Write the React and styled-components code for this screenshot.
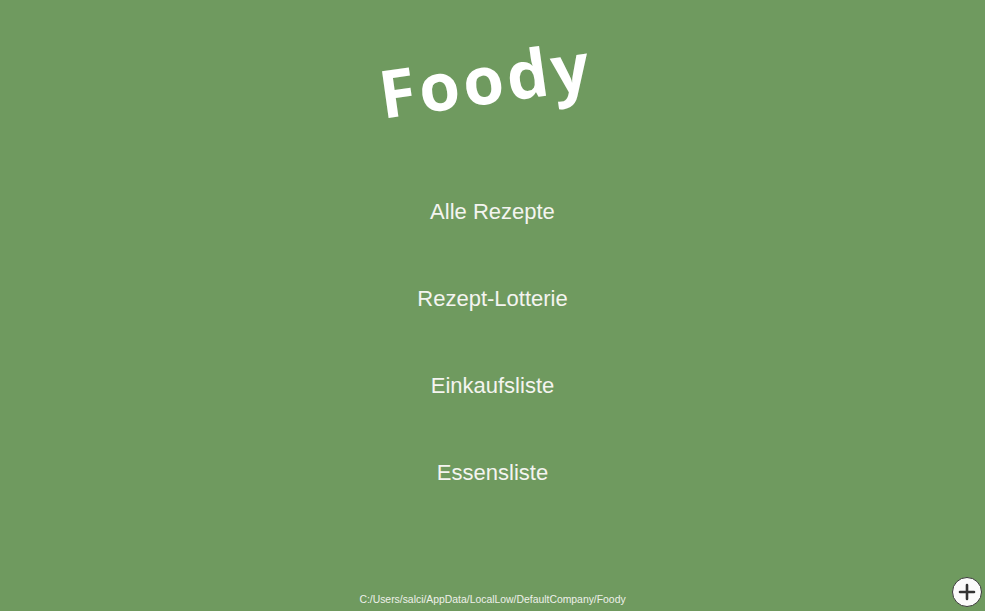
import React from 'react';
import styled, { createGlobalStyle } from 'styled-components';

const GlobalStyle = createGlobalStyle`
    html, body {
        margin: 0;
        padding: 0;
        background: #6f9a5f;
    }
    body {
        font-family: "Liberation Sans", Arial, sans-serif;
        overflow: hidden;
    }
`;

const Screen = styled.div`
    width: 985px;
    height: 611px;
    background: #6f9a5f;
    display: flex;
    flex-direction: column;
    align-items: center;
    position: relative;
`;

const Title = styled.h1`
    margin: 40px 0 0 -14px;
    font-family: "Open Sans", "DejaVu Sans", sans-serif;
    font-weight: 700;
    font-size: 66px;
    letter-spacing: 3.5px;
    color: #ffffff;
    line-height: 76px;
    transform: rotate(-8deg);
`;

const Menu = styled.nav`
    margin-top: 83px;
    display: flex;
    flex-direction: column;
    align-items: center;
    gap: 61px;
`;

const MenuItem = styled.div`
    font-size: 22px;
    line-height: 26px;
    color: #f4f4f0;
    cursor: pointer;
`;

const PathText = styled.div`
    margin-top: auto;
    margin-bottom: 6px;
    font-size: 10.4px;
    color: #eef0ea;
`;

const AddButton = styled.button`
    position: absolute;
    right: 3px;
    bottom: 4px;
    width: 30px;
    height: 30px;
    border-radius: 50%;
    border: 1.5px solid #3a3a3a;
    background: #fbfbfb;
    padding: 0;
    display: flex;
    align-items: center;
    justify-content: center;
`;

const items = ['Alle Rezepte', 'Rezept-Lotterie', 'Einkaufsliste', 'Essensliste'];

const App = () => {
    return (
        <Screen>
            <GlobalStyle />
            <Title>Foody</Title>
            <Menu>
                {items.map((item) => (
                    <MenuItem key={item}>{item}</MenuItem>
                ))}
            </Menu>
            <PathText>C:/Users/salci/AppData/LocalLow/DefaultCompany/Foody</PathText>
            <AddButton>
                <svg width="18" height="18" viewBox="0 0 18 18">
                    <path d="M9 2v14M2 9h14" stroke="#333" strokeWidth="2.6" strokeLinecap="round" />
                </svg>
            </AddButton>
        </Screen>
    );
};

export default App;
